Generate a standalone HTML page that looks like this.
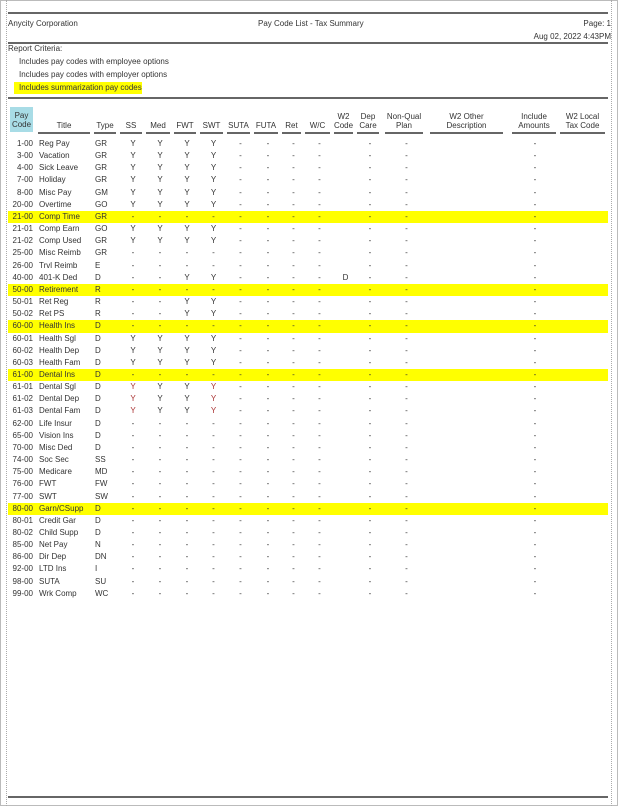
<!DOCTYPE html>
<html><head><meta charset="utf-8"><style>
*{margin:0;padding:0;box-sizing:border-box}
body{width:618px;height:806px;background:#fff;font-family:"Liberation Sans",sans-serif;font-size:8px;color:#333;position:relative;overflow:hidden}
.frame{position:absolute;left:0;top:0;width:618px;height:806px;border:1px solid #bbb}
.dv{position:absolute;top:0;bottom:0;width:0;border-left:1px dotted #aaa}
.hl{position:absolute;height:2px;background:#666;left:8px;width:600px}
.t{position:absolute;white-space:nowrap}
table{position:absolute;left:8px;top:107px;width:600px;border-collapse:collapse;table-layout:fixed}
th{font-weight:normal;vertical-align:bottom;padding:0}
th div{margin-right:4px;border-bottom:2px solid #666;text-align:center;line-height:9px;padding-bottom:2px;height:27px;display:flex;align-items:flex-end;justify-content:center}
td{height:12.15px;line-height:12.15px;padding:0;text-align:center;white-space:nowrap;overflow:hidden}
td:nth-child(1){text-align:right;padding-right:5px}
td:nth-child(2),td:nth-child(3){text-align:left;padding-left:1px}
tr.y td{background:#ffff00}
</style></head><body>
<div class="frame"></div>
<div class="dv" style="left:6px"></div>
<div class="dv" style="left:611px"></div>
<div class="hl" style="top:12px"></div>
<div class="t" style="left:8px;top:19px">Anycity Corporation</div>
<div class="t" style="left:258px;top:19px">Pay Code List - Tax Summary</div>
<div class="t" style="right:7px;top:19px">Page: 1</div>
<div class="t" style="right:7px;top:32px">Aug 02, 2022 4:43PM</div>
<div class="hl" style="top:42px"></div>
<div class="t" style="left:8px;top:44px">Report Criteria:</div>
<div class="t" style="left:19px;top:57px">Includes pay codes with employee options</div>
<div class="t" style="left:19px;top:70px">Includes pay codes with employer options</div>
<div class="t" style="left:14px;top:82px;background:#ffff00;padding:1px 5px;width:128px;height:12px">Includes summarization pay codes</div>
<div class="hl" style="top:97px"></div>
<table>
<colgroup><col style="width:30px"><col style="width:56px"><col style="width:26px"><col style="width:26px"><col style="width:28px"><col style="width:26px"><col style="width:27px"><col style="width:27px"><col style="width:28px"><col style="width:23px"><col style="width:29px"><col style="width:23px"><col style="width:26px"><col style="width:47px"><col style="width:80px"><col style="width:50px"><col style="width:48px"></colgroup>
<thead><tr>
<th><div style="margin-left:2px;margin-right:5px;background:#a8dce6;border-bottom:none;height:25px;margin-bottom:2px;padding-bottom:3px">Pay<br>Code</div></th>
<th><div>Title</div></th><th><div>Type</div></th><th><div>SS</div></th><th><div>Med</div></th><th><div>FWT</div></th><th><div>SWT</div></th><th><div>SUTA</div></th><th><div>FUTA</div></th><th><div>Ret</div></th><th><div>W/C</div></th><th><div>W2<br>Code</div></th><th><div>Dep<br>Care</div></th><th><div style="margin-left:2px;margin-right:7px">Non-Qual<br>Plan</div></th><th><div style="margin-right:7px">W2 Other<br>Description</div></th><th><div style="margin-left:2px">Include<br>Amounts</div></th><th><div style="margin-right:3px">W2 Local<br>Tax Code</div></th>
</tr></thead>
<tbody>
<tr><td style="height:16px;padding-top:4px">1-00</td><td style="padding-top:4px">Reg Pay</td><td style="padding-top:4px">GR</td><td style="padding-top:4px">Y</td><td style="padding-top:4px">Y</td><td style="padding-top:4px">Y</td><td style="padding-top:4px">Y</td><td style="padding-top:4px">-</td><td style="padding-top:4px">-</td><td style="padding-top:4px">-</td><td style="padding-top:4px">-</td><td></td><td style="padding-top:4px">-</td><td style="padding-top:4px">-</td><td></td><td style="padding-top:4px">-</td><td></td></tr>
<tr><td>3-00</td><td>Vacation</td><td>GR</td><td>Y</td><td>Y</td><td>Y</td><td>Y</td><td>-</td><td>-</td><td>-</td><td>-</td><td></td><td>-</td><td>-</td><td></td><td>-</td><td></td></tr>
<tr><td>4-00</td><td>Sick Leave</td><td>GR</td><td>Y</td><td>Y</td><td>Y</td><td>Y</td><td>-</td><td>-</td><td>-</td><td>-</td><td></td><td>-</td><td>-</td><td></td><td>-</td><td></td></tr>
<tr><td>7-00</td><td>Holiday</td><td>GR</td><td>Y</td><td>Y</td><td>Y</td><td>Y</td><td>-</td><td>-</td><td>-</td><td>-</td><td></td><td>-</td><td>-</td><td></td><td>-</td><td></td></tr>
<tr><td>8-00</td><td>Misc Pay</td><td>GM</td><td>Y</td><td>Y</td><td>Y</td><td>Y</td><td>-</td><td>-</td><td>-</td><td>-</td><td></td><td>-</td><td>-</td><td></td><td>-</td><td></td></tr>
<tr><td>20-00</td><td>Overtime</td><td>GO</td><td>Y</td><td>Y</td><td>Y</td><td>Y</td><td>-</td><td>-</td><td>-</td><td>-</td><td></td><td>-</td><td>-</td><td></td><td>-</td><td></td></tr>
<tr class="y"><td>21-00</td><td>Comp Time</td><td>GR</td><td>-</td><td>-</td><td>-</td><td>-</td><td>-</td><td>-</td><td>-</td><td>-</td><td></td><td>-</td><td>-</td><td></td><td>-</td><td></td></tr>
<tr><td>21-01</td><td>Comp Earn</td><td>GO</td><td>Y</td><td>Y</td><td>Y</td><td>Y</td><td>-</td><td>-</td><td>-</td><td>-</td><td></td><td>-</td><td>-</td><td></td><td>-</td><td></td></tr>
<tr><td>21-02</td><td>Comp Used</td><td>GR</td><td>Y</td><td>Y</td><td>Y</td><td>Y</td><td>-</td><td>-</td><td>-</td><td>-</td><td></td><td>-</td><td>-</td><td></td><td>-</td><td></td></tr>
<tr><td>25-00</td><td>Misc Reimb</td><td>GR</td><td>-</td><td>-</td><td>-</td><td>-</td><td>-</td><td>-</td><td>-</td><td>-</td><td></td><td>-</td><td>-</td><td></td><td>-</td><td></td></tr>
<tr><td>26-00</td><td>Trvl Reimb</td><td>E</td><td>-</td><td>-</td><td>-</td><td>-</td><td>-</td><td>-</td><td>-</td><td>-</td><td></td><td>-</td><td>-</td><td></td><td>-</td><td></td></tr>
<tr><td>40-00</td><td>401-K Ded</td><td>D</td><td>-</td><td>-</td><td>Y</td><td>Y</td><td>-</td><td>-</td><td>-</td><td>-</td><td>D</td><td>-</td><td>-</td><td></td><td>-</td><td></td></tr>
<tr class="y"><td>50-00</td><td>Retirement</td><td>R</td><td>-</td><td>-</td><td>-</td><td>-</td><td>-</td><td>-</td><td>-</td><td>-</td><td></td><td>-</td><td>-</td><td></td><td>-</td><td></td></tr>
<tr><td>50-01</td><td>Ret Reg</td><td>R</td><td>-</td><td>-</td><td>Y</td><td>Y</td><td>-</td><td>-</td><td>-</td><td>-</td><td></td><td>-</td><td>-</td><td></td><td>-</td><td></td></tr>
<tr><td>50-02</td><td>Ret PS</td><td>R</td><td>-</td><td>-</td><td>Y</td><td>Y</td><td>-</td><td>-</td><td>-</td><td>-</td><td></td><td>-</td><td>-</td><td></td><td>-</td><td></td></tr>
<tr class="y"><td>60-00</td><td>Health Ins</td><td>D</td><td>-</td><td>-</td><td>-</td><td>-</td><td>-</td><td>-</td><td>-</td><td>-</td><td></td><td>-</td><td>-</td><td></td><td>-</td><td></td></tr>
<tr><td>60-01</td><td>Health Sgl</td><td>D</td><td>Y</td><td>Y</td><td>Y</td><td>Y</td><td>-</td><td>-</td><td>-</td><td>-</td><td></td><td>-</td><td>-</td><td></td><td>-</td><td></td></tr>
<tr><td>60-02</td><td>Health Dep</td><td>D</td><td>Y</td><td>Y</td><td>Y</td><td>Y</td><td>-</td><td>-</td><td>-</td><td>-</td><td></td><td>-</td><td>-</td><td></td><td>-</td><td></td></tr>
<tr><td>60-03</td><td>Health Fam</td><td>D</td><td>Y</td><td>Y</td><td>Y</td><td>Y</td><td>-</td><td>-</td><td>-</td><td>-</td><td></td><td>-</td><td>-</td><td></td><td>-</td><td></td></tr>
<tr class="y"><td>61-00</td><td>Dental Ins</td><td>D</td><td>-</td><td>-</td><td>-</td><td>-</td><td>-</td><td>-</td><td>-</td><td>-</td><td></td><td>-</td><td>-</td><td></td><td>-</td><td></td></tr>
<tr><td>61-01</td><td>Dental Sgl</td><td>D</td><td style="color:#a33">Y</td><td>Y</td><td>Y</td><td style="color:#a33">Y</td><td>-</td><td>-</td><td>-</td><td>-</td><td></td><td>-</td><td>-</td><td></td><td>-</td><td></td></tr>
<tr><td>61-02</td><td>Dental Dep</td><td>D</td><td style="color:#a33">Y</td><td>Y</td><td>Y</td><td style="color:#a33">Y</td><td>-</td><td>-</td><td>-</td><td>-</td><td></td><td>-</td><td>-</td><td></td><td>-</td><td></td></tr>
<tr><td>61-03</td><td>Dental Fam</td><td>D</td><td style="color:#a33">Y</td><td>Y</td><td>Y</td><td style="color:#a33">Y</td><td>-</td><td>-</td><td>-</td><td>-</td><td></td><td>-</td><td>-</td><td></td><td>-</td><td></td></tr>
<tr><td>62-00</td><td>Life Insur</td><td>D</td><td>-</td><td>-</td><td>-</td><td>-</td><td>-</td><td>-</td><td>-</td><td>-</td><td></td><td>-</td><td>-</td><td></td><td>-</td><td></td></tr>
<tr><td>65-00</td><td>Vision Ins</td><td>D</td><td>-</td><td>-</td><td>-</td><td>-</td><td>-</td><td>-</td><td>-</td><td>-</td><td></td><td>-</td><td>-</td><td></td><td>-</td><td></td></tr>
<tr><td>70-00</td><td>Misc Ded</td><td>D</td><td>-</td><td>-</td><td>-</td><td>-</td><td>-</td><td>-</td><td>-</td><td>-</td><td></td><td>-</td><td>-</td><td></td><td>-</td><td></td></tr>
<tr><td>74-00</td><td>Soc Sec</td><td>SS</td><td>-</td><td>-</td><td>-</td><td>-</td><td>-</td><td>-</td><td>-</td><td>-</td><td></td><td>-</td><td>-</td><td></td><td>-</td><td></td></tr>
<tr><td>75-00</td><td>Medicare</td><td>MD</td><td>-</td><td>-</td><td>-</td><td>-</td><td>-</td><td>-</td><td>-</td><td>-</td><td></td><td>-</td><td>-</td><td></td><td>-</td><td></td></tr>
<tr><td>76-00</td><td>FWT</td><td>FW</td><td>-</td><td>-</td><td>-</td><td>-</td><td>-</td><td>-</td><td>-</td><td>-</td><td></td><td>-</td><td>-</td><td></td><td>-</td><td></td></tr>
<tr><td>77-00</td><td>SWT</td><td>SW</td><td>-</td><td>-</td><td>-</td><td>-</td><td>-</td><td>-</td><td>-</td><td>-</td><td></td><td>-</td><td>-</td><td></td><td>-</td><td></td></tr>
<tr class="y"><td>80-00</td><td>Garn/CSupp</td><td>D</td><td>-</td><td>-</td><td>-</td><td>-</td><td>-</td><td>-</td><td>-</td><td>-</td><td></td><td>-</td><td>-</td><td></td><td>-</td><td></td></tr>
<tr><td>80-01</td><td>Credit Gar</td><td>D</td><td>-</td><td>-</td><td>-</td><td>-</td><td>-</td><td>-</td><td>-</td><td>-</td><td></td><td>-</td><td>-</td><td></td><td>-</td><td></td></tr>
<tr><td>80-02</td><td>Child Supp</td><td>D</td><td>-</td><td>-</td><td>-</td><td>-</td><td>-</td><td>-</td><td>-</td><td>-</td><td></td><td>-</td><td>-</td><td></td><td>-</td><td></td></tr>
<tr><td>85-00</td><td>Net Pay</td><td>N</td><td>-</td><td>-</td><td>-</td><td>-</td><td>-</td><td>-</td><td>-</td><td>-</td><td></td><td>-</td><td>-</td><td></td><td>-</td><td></td></tr>
<tr><td>86-00</td><td>Dir Dep</td><td>DN</td><td>-</td><td>-</td><td>-</td><td>-</td><td>-</td><td>-</td><td>-</td><td>-</td><td></td><td>-</td><td>-</td><td></td><td>-</td><td></td></tr>
<tr><td>92-00</td><td>LTD Ins</td><td>I</td><td>-</td><td>-</td><td>-</td><td>-</td><td>-</td><td>-</td><td>-</td><td>-</td><td></td><td>-</td><td>-</td><td></td><td>-</td><td></td></tr>
<tr><td>98-00</td><td>SUTA</td><td>SU</td><td>-</td><td>-</td><td>-</td><td>-</td><td>-</td><td>-</td><td>-</td><td>-</td><td></td><td>-</td><td>-</td><td></td><td>-</td><td></td></tr>
<tr><td>99-00</td><td>Wrk Comp</td><td>WC</td><td>-</td><td>-</td><td>-</td><td>-</td><td>-</td><td>-</td><td>-</td><td>-</td><td></td><td>-</td><td>-</td><td></td><td>-</td><td></td></tr>
</tbody></table>
<div class="hl" style="top:796px"></div>
</body></html>
